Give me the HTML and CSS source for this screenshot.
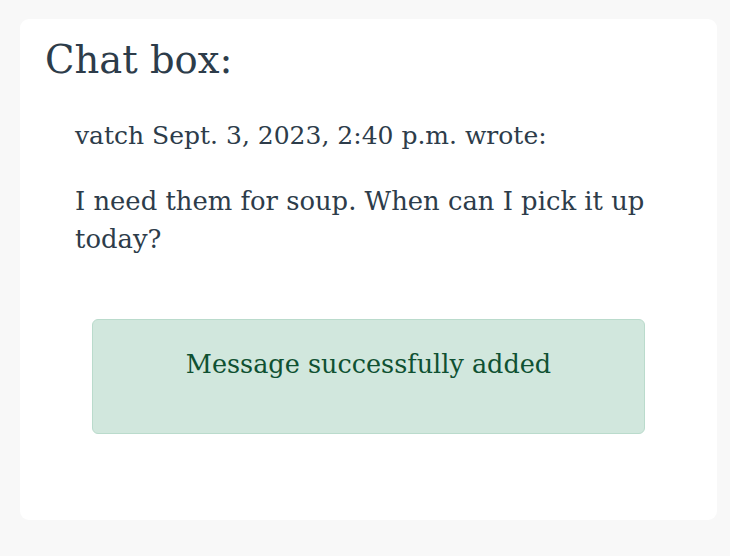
FILE: index.html
```html
<!DOCTYPE html>
<html lang="en">
<head>
<meta charset="utf-8">
<title>Chat box</title>
<link rel="stylesheet" href="styles.css">
</head>
<body>
<main class="card">
  <h1 class="title">Chat box:</h1>
  <section class="messages">
    <p class="meta">vatch Sept. 3, 2023, 2:40 p.m. wrote:</p>
    <p class="body">I need them for soup. When can I pick it up today?</p>
  </section>
  <div class="alert">
    <p>Message successfully added</p>
  </div>
</main>
</body>
</html>
```

FILE: styles.css
```css
* { box-sizing: border-box; }
html, body { margin: 0; padding: 0; }
body {
  background: #f8f8f8;
  font-family: "DejaVu Serif", "Liberation Serif", serif;
  color: #2d3c4a;
  width: 730px;
  height: 556px;
  overflow: hidden;
}
.card {
  margin: 19px 13px 0 20px;
  height: 501px;
  background: #ffffff;
  border-radius: 9px;
  padding: 18px 25px 0 25px;
}
.title {
  margin: 0;
  font-size: 38.5px;
  font-weight: 400;
  line-height: 46px;
}
.messages {
  padding: 0 30px;
  margin-top: 36px;
}
.meta {
  margin: 0;
  font-size: 25px;
  line-height: 34px;
}
.body {
  margin: 29px 0 0 0;
  font-size: 25.85px;
  line-height: 38px;
}
.alert {
  margin: 61px 47px 0 47px;
  height: 115px;
  background: #d1e7dd;
  border: 1px solid #badbcc;
  border-radius: 6px;
  color: #0f5132;
  text-align: center;
  padding-top: 26px;
}
.alert p {
  margin: 0;
  font-size: 25.5px;
  line-height: 36px;
}
```
